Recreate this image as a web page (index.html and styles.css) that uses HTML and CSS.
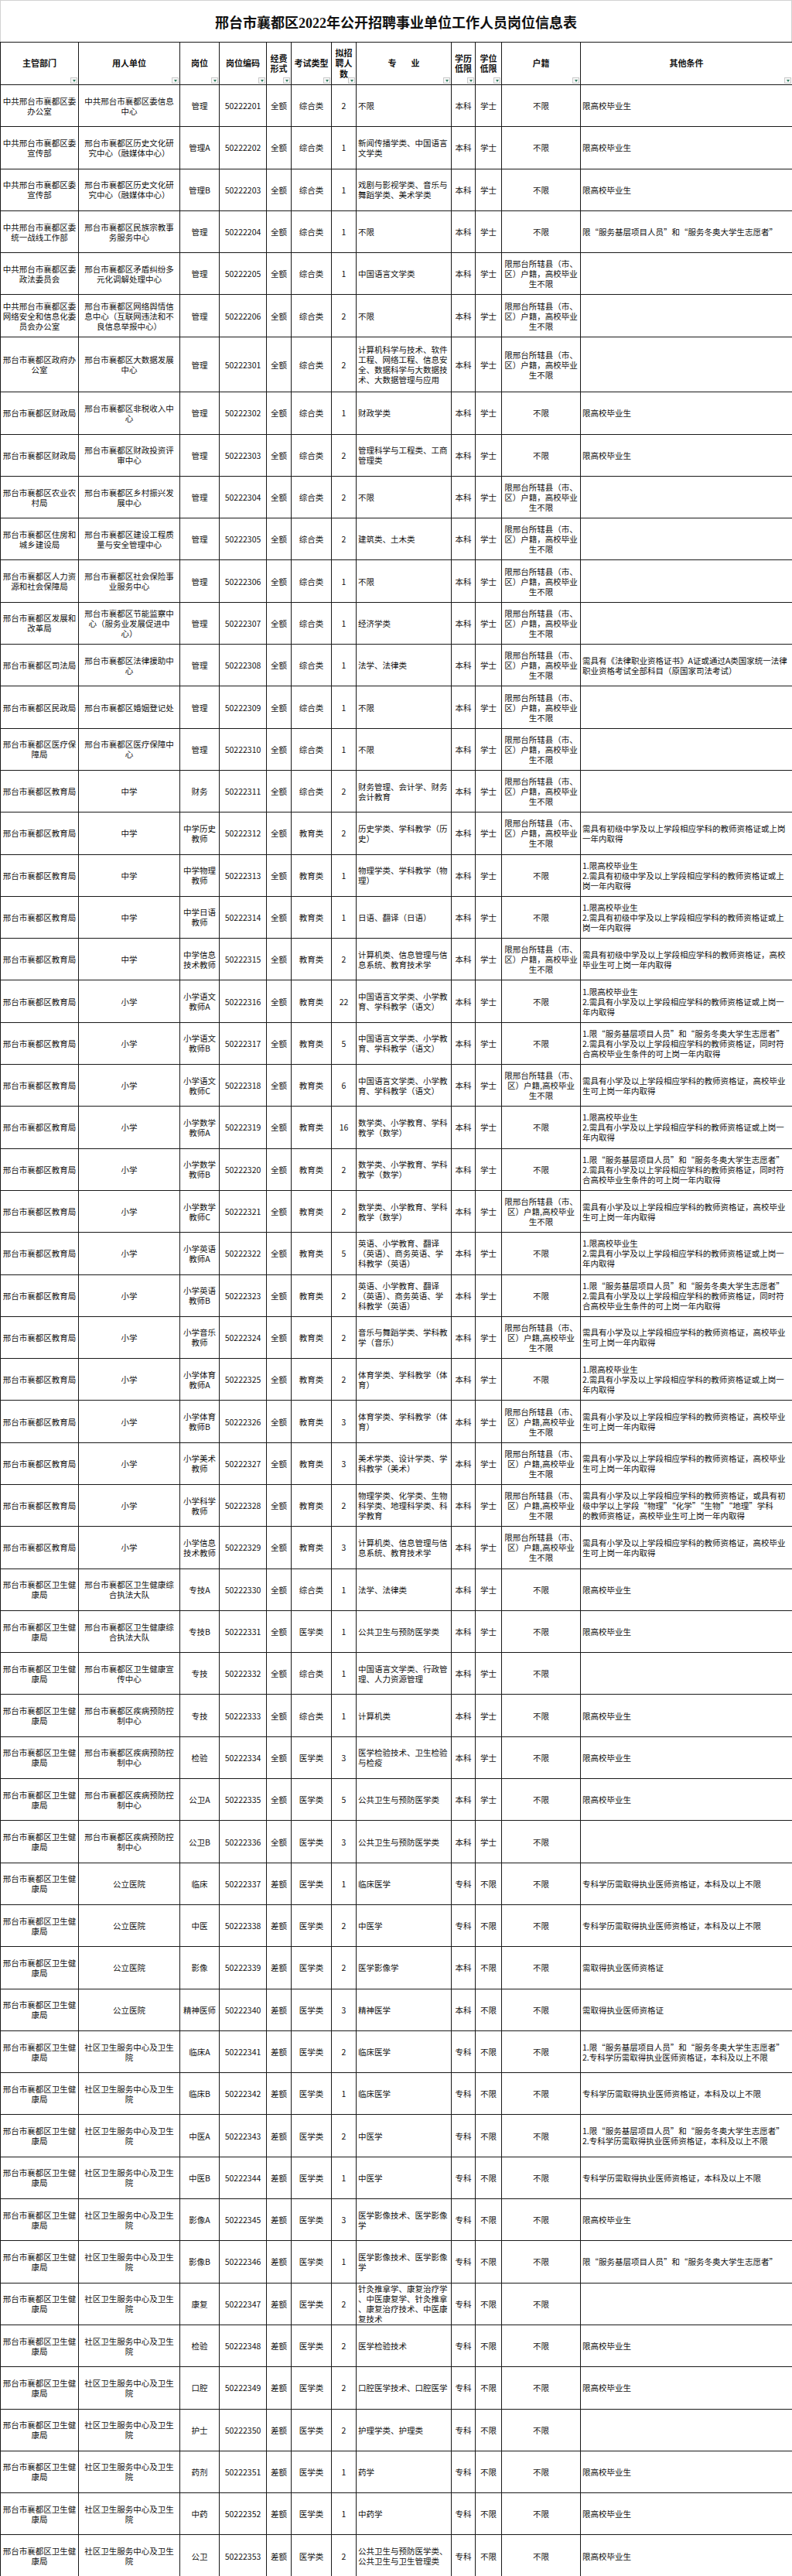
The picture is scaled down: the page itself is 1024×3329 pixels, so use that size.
FILE: index.html
```html
<!DOCTYPE html>
<html lang="zh-CN">
<head>
<meta charset="utf-8">
<title>邢台市襄都区2022年公开招聘事业单位工作人员岗位信息表</title>
<link rel="stylesheet" href="styles.css">
</head>
<body>
<div class="sheet">
  <div class="title">邢台市襄都区2022年公开招聘事业单位工作人员岗位信息表</div>
  <table class="grid">
    <colgroup>
      <col class="c1"><col class="c2"><col class="c3"><col class="c4"><col class="c5"><col class="c6"><col class="c7"><col class="c8"><col class="c9"><col class="c10"><col class="c11"><col class="c12">
    </colgroup>
    <thead>
      <tr class="head">
        <th>主管部门<span class="flt"></span></th>
        <th>用人单位<span class="flt"></span></th>
        <th>岗位<span class="flt"></span></th>
        <th>岗位编码<span class="flt"></span></th>
        <th>经费<br>形式<span class="flt"></span></th>
        <th>考试类型<span class="flt"></span></th>
        <th>拟招<br>聘人<br>数<span class="flt"></span></th>
        <th>专<span class="gap"></span>业<span class="flt"></span></th>
        <th>学历<br>低限<span class="flt"></span></th>
        <th>学位<br>低限<span class="flt"></span></th>
        <th>户籍<span class="flt"></span></th>
        <th>其他条件<span class="flt"></span></th>
      </tr>
    </thead>
    <tbody>
      <tr><td>中共邢台市襄都区委<br>办公室</td><td>中共邢台市襄都区委信息<br>中心</td><td>管理</td><td>50222201</td><td>全额</td><td>综合类</td><td>2</td><td class="l">不限</td><td>本科</td><td>学士</td><td>不限</td><td class="l">限高校毕业生</td></tr>
      <tr><td>中共邢台市襄都区委<br>宣传部</td><td>邢台市襄都区历史文化研<br>究中心（融媒体中心）</td><td>管理A</td><td>50222202</td><td>全额</td><td>综合类</td><td>1</td><td class="l">新闻传播学类、中国语言<br>文学类</td><td>本科</td><td>学士</td><td>不限</td><td class="l">限高校毕业生</td></tr>
      <tr><td>中共邢台市襄都区委<br>宣传部</td><td>邢台市襄都区历史文化研<br>究中心（融媒体中心）</td><td>管理B</td><td>50222203</td><td>全额</td><td>综合类</td><td>1</td><td class="l">戏剧与影视学类、音乐与<br>舞蹈学类、美术学类</td><td>本科</td><td>学士</td><td>不限</td><td class="l">限高校毕业生</td></tr>
      <tr><td>中共邢台市襄都区委<br>统一战线工作部</td><td>邢台市襄都区民族宗教事<br>务服务中心</td><td>管理</td><td>50222204</td><td>全额</td><td>综合类</td><td>1</td><td class="l">不限</td><td>本科</td><td>学士</td><td>不限</td><td class="l">限“服务基层项目人员”和“服务冬奥大学生志愿者”</td></tr>
      <tr><td>中共邢台市襄都区委<br>政法委员会</td><td>邢台市襄都区矛盾纠纷多<br>元化调解处理中心</td><td>管理</td><td>50222205</td><td>全额</td><td>综合类</td><td>1</td><td class="l">中国语言文学类</td><td>本科</td><td>学士</td><td>限邢台所辖县（市、<br>区）户籍，高校毕业<br>生不限</td><td class="l"></td></tr>
      <tr><td>中共邢台市襄都区委<br>网络安全和信息化委<br>员会办公室</td><td>邢台市襄都区网络舆情信<br>息中心（互联网违法和不<br>良信息举报中心）</td><td>管理</td><td>50222206</td><td>全额</td><td>综合类</td><td>2</td><td class="l">不限</td><td>本科</td><td>学士</td><td>限邢台所辖县（市、<br>区）户籍，高校毕业<br>生不限</td><td class="l"></td></tr>
      <tr class="tall"><td>邢台市襄都区政府办<br>公室</td><td>邢台市襄都区大数据发展<br>中心</td><td>管理</td><td>50222301</td><td>全额</td><td>综合类</td><td>2</td><td class="l">计算机科学与技术、软件<br>工程、网络工程、信息安<br>全、数据科学与大数据技<br>术、大数据管理与应用</td><td>本科</td><td>学士</td><td>限邢台所辖县（市、<br>区）户籍，高校毕业<br>生不限</td><td class="l"></td></tr>
      <tr><td>邢台市襄都区财政局</td><td>邢台市襄都区非税收入中<br>心</td><td>管理</td><td>50222302</td><td>全额</td><td>综合类</td><td>1</td><td class="l">财政学类</td><td>本科</td><td>学士</td><td>不限</td><td class="l">限高校毕业生</td></tr>
      <tr><td>邢台市襄都区财政局</td><td>邢台市襄都区财政投资评<br>审中心</td><td>管理</td><td>50222303</td><td>全额</td><td>综合类</td><td>2</td><td class="l">管理科学与工程类、工商<br>管理类</td><td>本科</td><td>学士</td><td>不限</td><td class="l">限高校毕业生</td></tr>
      <tr><td>邢台市襄都区农业农<br>村局</td><td>邢台市襄都区乡村振兴发<br>展中心</td><td>管理</td><td>50222304</td><td>全额</td><td>综合类</td><td>2</td><td class="l">不限</td><td>本科</td><td>学士</td><td>限邢台所辖县（市、<br>区）户籍，高校毕业<br>生不限</td><td class="l"></td></tr>
      <tr><td>邢台市襄都区住房和<br>城乡建设局</td><td>邢台市襄都区建设工程质<br>量与安全管理中心</td><td>管理</td><td>50222305</td><td>全额</td><td>综合类</td><td>2</td><td class="l">建筑类、土木类</td><td>本科</td><td>学士</td><td>限邢台所辖县（市、<br>区）户籍，高校毕业<br>生不限</td><td class="l"></td></tr>
      <tr><td>邢台市襄都区人力资<br>源和社会保障局</td><td>邢台市襄都区社会保险事<br>业服务中心</td><td>管理</td><td>50222306</td><td>全额</td><td>综合类</td><td>1</td><td class="l">不限</td><td>本科</td><td>学士</td><td>限邢台所辖县（市、<br>区）户籍，高校毕业<br>生不限</td><td class="l"></td></tr>
      <tr><td>邢台市襄都区发展和<br>改革局</td><td>邢台市襄都区节能监察中<br>心（服务业发展促进中<br>心）</td><td>管理</td><td>50222307</td><td>全额</td><td>综合类</td><td>1</td><td class="l">经济学类</td><td>本科</td><td>学士</td><td>限邢台所辖县（市、<br>区）户籍，高校毕业<br>生不限</td><td class="l"></td></tr>
      <tr><td>邢台市襄都区司法局</td><td>邢台市襄都区法律援助中<br>心</td><td>管理</td><td>50222308</td><td>全额</td><td>综合类</td><td>1</td><td class="l">法学、法律类</td><td>本科</td><td>学士</td><td>限邢台所辖县（市、<br>区）户籍，高校毕业<br>生不限</td><td class="l">需具有《法律职业资格证书》A证或通过A类国家统一法律<br>职业资格考试全部科目（原国家司法考试）</td></tr>
      <tr><td>邢台市襄都区民政局</td><td>邢台市襄都区婚姻登记处</td><td>管理</td><td>50222309</td><td>全额</td><td>综合类</td><td>1</td><td class="l">不限</td><td>本科</td><td>学士</td><td>限邢台所辖县（市、<br>区）户籍，高校毕业<br>生不限</td><td class="l"></td></tr>
      <tr><td>邢台市襄都区医疗保<br>障局</td><td>邢台市襄都区医疗保障中<br>心</td><td>管理</td><td>50222310</td><td>全额</td><td>综合类</td><td>1</td><td class="l">不限</td><td>本科</td><td>学士</td><td>限邢台所辖县（市、<br>区）户籍，高校毕业<br>生不限</td><td class="l"></td></tr>
      <tr><td>邢台市襄都区教育局</td><td>中学</td><td>财务</td><td>50222311</td><td>全额</td><td>综合类</td><td>2</td><td class="l">财务管理、会计学、财务<br>会计教育</td><td>本科</td><td>学士</td><td>限邢台所辖县（市、<br>区）户籍，高校毕业<br>生不限</td><td class="l"></td></tr>
      <tr><td>邢台市襄都区教育局</td><td>中学</td><td>中学历史<br>教师</td><td>50222312</td><td>全额</td><td>教育类</td><td>2</td><td class="l">历史学类、学科教学（历<br>史）</td><td>本科</td><td>学士</td><td>限邢台所辖县（市、<br>区）户籍，高校毕业<br>生不限</td><td class="l">需具有初级中学及以上学段相应学科的教师资格证或上岗<br>一年内取得</td></tr>
      <tr><td>邢台市襄都区教育局</td><td>中学</td><td>中学物理<br>教师</td><td>50222313</td><td>全额</td><td>教育类</td><td>1</td><td class="l">物理学类、学科教学（物<br>理）</td><td>本科</td><td>学士</td><td>不限</td><td class="l">1.限高校毕业生<br>2.需具有初级中学及以上学段相应学科的教师资格证或上<br>岗一年内取得</td></tr>
      <tr><td>邢台市襄都区教育局</td><td>中学</td><td>中学日语<br>教师</td><td>50222314</td><td>全额</td><td>教育类</td><td>1</td><td class="l">日语、翻译（日语）</td><td>本科</td><td>学士</td><td>不限</td><td class="l">1.限高校毕业生<br>2.需具有初级中学及以上学段相应学科的教师资格证或上<br>岗一年内取得</td></tr>
      <tr><td>邢台市襄都区教育局</td><td>中学</td><td>中学信息<br>技术教师</td><td>50222315</td><td>全额</td><td>教育类</td><td>2</td><td class="l">计算机类、信息管理与信<br>息系统、教育技术学</td><td>本科</td><td>学士</td><td>限邢台所辖县（市、<br>区）户籍，高校毕业<br>生不限</td><td class="l">需具有初级中学及以上学段相应学科的教师资格证，高校<br>毕业生可上岗一年内取得</td></tr>
      <tr><td>邢台市襄都区教育局</td><td>小学</td><td>小学语文<br>教师A</td><td>50222316</td><td>全额</td><td>教育类</td><td>22</td><td class="l">中国语言文学类、小学教<br>育、学科教学（语文）</td><td>本科</td><td>学士</td><td>不限</td><td class="l">1.限高校毕业生<br>2.需具有小学及以上学段相应学科的教师资格证或上岗一<br>年内取得</td></tr>
      <tr><td>邢台市襄都区教育局</td><td>小学</td><td>小学语文<br>教师B</td><td>50222317</td><td>全额</td><td>教育类</td><td>5</td><td class="l">中国语言文学类、小学教<br>育、学科教学（语文）</td><td>本科</td><td>学士</td><td>不限</td><td class="l">1.限“服务基层项目人员”和“服务冬奥大学生志愿者”<br>2.需具有小学及以上学段相应学科的教师资格证，同时符<br>合高校毕业生条件的可上岗一年内取得</td></tr>
      <tr><td>邢台市襄都区教育局</td><td>小学</td><td>小学语文<br>教师C</td><td>50222318</td><td>全额</td><td>教育类</td><td>6</td><td class="l">中国语言文学类、小学教<br>育、学科教学（语文）</td><td>本科</td><td>学士</td><td>限邢台所辖县（市、<br>区）户籍,高校毕业<br>生不限</td><td class="l">需具有小学及以上学段相应学科的教师资格证，高校毕业<br>生可上岗一年内取得</td></tr>
      <tr><td>邢台市襄都区教育局</td><td>小学</td><td>小学数学<br>教师A</td><td>50222319</td><td>全额</td><td>教育类</td><td>16</td><td class="l">数学类、小学教育、学科<br>教学（数学）</td><td>本科</td><td>学士</td><td>不限</td><td class="l">1.限高校毕业生<br>2.需具有小学及以上学段相应学科的教师资格证或上岗一<br>年内取得</td></tr>
      <tr><td>邢台市襄都区教育局</td><td>小学</td><td>小学数学<br>教师B</td><td>50222320</td><td>全额</td><td>教育类</td><td>2</td><td class="l">数学类、小学教育、学科<br>教学（数学）</td><td>本科</td><td>学士</td><td>不限</td><td class="l">1.限“服务基层项目人员”和“服务冬奥大学生志愿者”<br>2.需具有小学及以上学段相应学科的教师资格证，同时符<br>合高校毕业生条件的可上岗一年内取得</td></tr>
      <tr><td>邢台市襄都区教育局</td><td>小学</td><td>小学数学<br>教师C</td><td>50222321</td><td>全额</td><td>教育类</td><td>2</td><td class="l">数学类、小学教育、学科<br>教学（数学）</td><td>本科</td><td>学士</td><td>限邢台所辖县（市、<br>区）户籍,高校毕业<br>生不限</td><td class="l">需具有小学及以上学段相应学科的教师资格证，高校毕业<br>生可上岗一年内取得</td></tr>
      <tr><td>邢台市襄都区教育局</td><td>小学</td><td>小学英语<br>教师A</td><td>50222322</td><td>全额</td><td>教育类</td><td>5</td><td class="l">英语、小学教育、翻译<br>（英语）、商务英语、学<br>科教学（英语）</td><td>本科</td><td>学士</td><td>不限</td><td class="l">1.限高校毕业生<br>2.需具有小学及以上学段相应学科的教师资格证或上岗一<br>年内取得</td></tr>
      <tr><td>邢台市襄都区教育局</td><td>小学</td><td>小学英语<br>教师B</td><td>50222323</td><td>全额</td><td>教育类</td><td>2</td><td class="l">英语、小学教育、翻译<br>（英语）、商务英语、学<br>科教学（英语）</td><td>本科</td><td>学士</td><td>不限</td><td class="l">1.限“服务基层项目人员”和“服务冬奥大学生志愿者”<br>2.需具有小学及以上学段相应学科的教师资格证，同时符<br>合高校毕业生条件的可上岗一年内取得</td></tr>
      <tr><td>邢台市襄都区教育局</td><td>小学</td><td>小学音乐<br>教师</td><td>50222324</td><td>全额</td><td>教育类</td><td>2</td><td class="l">音乐与舞蹈学类、学科教<br>学（音乐）</td><td>本科</td><td>学士</td><td>限邢台所辖县（市、<br>区）户籍,高校毕业<br>生不限</td><td class="l">需具有小学及以上学段相应学科的教师资格证，高校毕业<br>生可上岗一年内取得</td></tr>
      <tr><td>邢台市襄都区教育局</td><td>小学</td><td>小学体育<br>教师A</td><td>50222325</td><td>全额</td><td>教育类</td><td>2</td><td class="l">体育学类、学科教学（体<br>育）</td><td>本科</td><td>学士</td><td>不限</td><td class="l">1.限高校毕业生<br>2.需具有小学及以上学段相应学科的教师资格证或上岗一<br>年内取得</td></tr>
      <tr><td>邢台市襄都区教育局</td><td>小学</td><td>小学体育<br>教师B</td><td>50222326</td><td>全额</td><td>教育类</td><td>3</td><td class="l">体育学类、学科教学（体<br>育）</td><td>本科</td><td>学士</td><td>限邢台所辖县（市、<br>区）户籍,高校毕业<br>生不限</td><td class="l">需具有小学及以上学段相应学科的教师资格证，高校毕业<br>生可上岗一年内取得</td></tr>
      <tr><td>邢台市襄都区教育局</td><td>小学</td><td>小学美术<br>教师</td><td>50222327</td><td>全额</td><td>教育类</td><td>3</td><td class="l">美术学类、设计学类、学<br>科教学（美术）</td><td>本科</td><td>学士</td><td>限邢台所辖县（市、<br>区）户籍,高校毕业<br>生不限</td><td class="l">需具有小学及以上学段相应学科的教师资格证，高校毕业<br>生可上岗一年内取得</td></tr>
      <tr><td>邢台市襄都区教育局</td><td>小学</td><td>小学科学<br>教师</td><td>50222328</td><td>全额</td><td>教育类</td><td>2</td><td class="l">物理学类、化学类、生物<br>科学类、地理科学类、科<br>学教育</td><td>本科</td><td>学士</td><td>限邢台所辖县（市、<br>区）户籍,高校毕业<br>生不限</td><td class="l">需具有小学及以上学段相应学科的教师资格证，或具有初<br>级中学以上学段“物理”“化学”“生物”“地理”学科<br>的教师资格证，高校毕业生可上岗一年内取得</td></tr>
      <tr><td>邢台市襄都区教育局</td><td>小学</td><td>小学信息<br>技术教师</td><td>50222329</td><td>全额</td><td>教育类</td><td>3</td><td class="l">计算机类、信息管理与信<br>息系统、教育技术学</td><td>本科</td><td>学士</td><td>限邢台所辖县（市、<br>区）户籍,高校毕业<br>生不限</td><td class="l">需具有小学及以上学段相应学科的教师资格证，高校毕业<br>生可上岗一年内取得</td></tr>
      <tr><td>邢台市襄都区卫生健<br>康局</td><td>邢台市襄都区卫生健康综<br>合执法大队</td><td>专技A</td><td>50222330</td><td>全额</td><td>综合类</td><td>1</td><td class="l">法学、法律类</td><td>本科</td><td>学士</td><td>不限</td><td class="l">限高校毕业生</td></tr>
      <tr><td>邢台市襄都区卫生健<br>康局</td><td>邢台市襄都区卫生健康综<br>合执法大队</td><td>专技B</td><td>50222331</td><td>全额</td><td>医学类</td><td>1</td><td class="l">公共卫生与预防医学类</td><td>本科</td><td>学士</td><td>不限</td><td class="l">限高校毕业生</td></tr>
      <tr><td>邢台市襄都区卫生健<br>康局</td><td>邢台市襄都区卫生健康宣<br>传中心</td><td>专技</td><td>50222332</td><td>全额</td><td>综合类</td><td>1</td><td class="l">中国语言文学类、行政管<br>理、人力资源管理</td><td>本科</td><td>学士</td><td>不限</td><td class="l"></td></tr>
      <tr><td>邢台市襄都区卫生健<br>康局</td><td>邢台市襄都区疾病预防控<br>制中心</td><td>专技</td><td>50222333</td><td>全额</td><td>综合类</td><td>1</td><td class="l">计算机类</td><td>本科</td><td>学士</td><td>不限</td><td class="l">限高校毕业生</td></tr>
      <tr><td>邢台市襄都区卫生健<br>康局</td><td>邢台市襄都区疾病预防控<br>制中心</td><td>检验</td><td>50222334</td><td>全额</td><td>医学类</td><td>3</td><td class="l">医学检验技术、卫生检验<br>与检疫</td><td>本科</td><td>学士</td><td>不限</td><td class="l">限高校毕业生</td></tr>
      <tr><td>邢台市襄都区卫生健<br>康局</td><td>邢台市襄都区疾病预防控<br>制中心</td><td>公卫A</td><td>50222335</td><td>全额</td><td>医学类</td><td>5</td><td class="l">公共卫生与预防医学类</td><td>本科</td><td>学士</td><td>不限</td><td class="l">限高校毕业生</td></tr>
      <tr><td>邢台市襄都区卫生健<br>康局</td><td>邢台市襄都区疾病预防控<br>制中心</td><td>公卫B</td><td>50222336</td><td>全额</td><td>医学类</td><td>3</td><td class="l">公共卫生与预防医学类</td><td>本科</td><td>学士</td><td>不限</td><td class="l"></td></tr>
      <tr><td>邢台市襄都区卫生健<br>康局</td><td>公立医院</td><td>临床</td><td>50222337</td><td>差额</td><td>医学类</td><td>1</td><td class="l">临床医学</td><td>专科</td><td>不限</td><td>不限</td><td class="l">专科学历需取得执业医师资格证，本科及以上不限</td></tr>
      <tr><td>邢台市襄都区卫生健<br>康局</td><td>公立医院</td><td>中医</td><td>50222338</td><td>差额</td><td>医学类</td><td>2</td><td class="l">中医学</td><td>专科</td><td>不限</td><td>不限</td><td class="l">专科学历需取得执业医师资格证，本科及以上不限</td></tr>
      <tr><td>邢台市襄都区卫生健<br>康局</td><td>公立医院</td><td>影像</td><td>50222339</td><td>差额</td><td>医学类</td><td>2</td><td class="l">医学影像学</td><td>本科</td><td>不限</td><td>不限</td><td class="l">需取得执业医师资格证</td></tr>
      <tr><td>邢台市襄都区卫生健<br>康局</td><td>公立医院</td><td>精神医师</td><td>50222340</td><td>差额</td><td>医学类</td><td>3</td><td class="l">精神医学</td><td>本科</td><td>不限</td><td>不限</td><td class="l">需取得执业医师资格证</td></tr>
      <tr><td>邢台市襄都区卫生健<br>康局</td><td>社区卫生服务中心及卫生<br>院</td><td>临床A</td><td>50222341</td><td>差额</td><td>医学类</td><td>2</td><td class="l">临床医学</td><td>专科</td><td>不限</td><td>不限</td><td class="l">1.限“服务基层项目人员”和“服务冬奥大学生志愿者”<br>2.专科学历需取得执业医师资格证，本科及以上不限</td></tr>
      <tr><td>邢台市襄都区卫生健<br>康局</td><td>社区卫生服务中心及卫生<br>院</td><td>临床B</td><td>50222342</td><td>差额</td><td>医学类</td><td>1</td><td class="l">临床医学</td><td>专科</td><td>不限</td><td>不限</td><td class="l">专科学历需取得执业医师资格证，本科及以上不限</td></tr>
      <tr><td>邢台市襄都区卫生健<br>康局</td><td>社区卫生服务中心及卫生<br>院</td><td>中医A</td><td>50222343</td><td>差额</td><td>医学类</td><td>2</td><td class="l">中医学</td><td>专科</td><td>不限</td><td>不限</td><td class="l">1.限“服务基层项目人员”和“服务冬奥大学生志愿者”<br>2.专科学历需取得执业医师资格证，本科及以上不限</td></tr>
      <tr><td>邢台市襄都区卫生健<br>康局</td><td>社区卫生服务中心及卫生<br>院</td><td>中医B</td><td>50222344</td><td>差额</td><td>医学类</td><td>1</td><td class="l">中医学</td><td>专科</td><td>不限</td><td>不限</td><td class="l">专科学历需取得执业医师资格证，本科及以上不限</td></tr>
      <tr><td>邢台市襄都区卫生健<br>康局</td><td>社区卫生服务中心及卫生<br>院</td><td>影像A</td><td>50222345</td><td>差额</td><td>医学类</td><td>3</td><td class="l">医学影像技术、医学影像<br>学</td><td>专科</td><td>不限</td><td>不限</td><td class="l">限高校毕业生</td></tr>
      <tr><td>邢台市襄都区卫生健<br>康局</td><td>社区卫生服务中心及卫生<br>院</td><td>影像B</td><td>50222346</td><td>差额</td><td>医学类</td><td>1</td><td class="l">医学影像技术、医学影像<br>学</td><td>专科</td><td>不限</td><td>不限</td><td class="l">限“服务基层项目人员”和“服务冬奥大学生志愿者”</td></tr>
      <tr><td>邢台市襄都区卫生健<br>康局</td><td>社区卫生服务中心及卫生<br>院</td><td>康复</td><td>50222347</td><td>差额</td><td>医学类</td><td>2</td><td class="l">针灸推拿学、康复治疗学<br>、中医康复学、针灸推拿<br>、康复治疗技术、中医康<br>复技术</td><td>专科</td><td>不限</td><td>不限</td><td class="l"></td></tr>
      <tr><td>邢台市襄都区卫生健<br>康局</td><td>社区卫生服务中心及卫生<br>院</td><td>检验</td><td>50222348</td><td>差额</td><td>医学类</td><td>2</td><td class="l">医学检验技术</td><td>专科</td><td>不限</td><td>不限</td><td class="l">限高校毕业生</td></tr>
      <tr><td>邢台市襄都区卫生健<br>康局</td><td>社区卫生服务中心及卫生<br>院</td><td>口腔</td><td>50222349</td><td>差额</td><td>医学类</td><td>2</td><td class="l">口腔医学技术、口腔医学</td><td>专科</td><td>不限</td><td>不限</td><td class="l">限高校毕业生</td></tr>
      <tr><td>邢台市襄都区卫生健<br>康局</td><td>社区卫生服务中心及卫生<br>院</td><td>护士</td><td>50222350</td><td>差额</td><td>医学类</td><td>2</td><td class="l">护理学类、护理类</td><td>专科</td><td>不限</td><td>不限</td><td class="l"></td></tr>
      <tr><td>邢台市襄都区卫生健<br>康局</td><td>社区卫生服务中心及卫生<br>院</td><td>药剂</td><td>50222351</td><td>差额</td><td>医学类</td><td>1</td><td class="l">药学</td><td>专科</td><td>不限</td><td>不限</td><td class="l">限高校毕业生</td></tr>
      <tr><td>邢台市襄都区卫生健<br>康局</td><td>社区卫生服务中心及卫生<br>院</td><td>中药</td><td>50222352</td><td>差额</td><td>医学类</td><td>1</td><td class="l">中药学</td><td>专科</td><td>不限</td><td>不限</td><td class="l">限高校毕业生</td></tr>
      <tr><td>邢台市襄都区卫生健<br>康局</td><td>社区卫生服务中心及卫生<br>院</td><td>公卫</td><td>50222353</td><td>差额</td><td>医学类</td><td>2</td><td class="l">公共卫生与预防医学类、<br>公共卫生与卫生管理类</td><td>专科</td><td>不限</td><td>不限</td><td class="l">限高校毕业生</td></tr>
    </tbody>
  </table>
</div>
</body>
</html>
```

FILE: styles.css
```css
html, body {
  margin: 0;
  padding: 0;
  background: #ffffff;
}

body {
  width: 1024px;
  font-family: "Noto Sans CJK SC", "Liberation Sans", sans-serif;
  color: #111111;
}

.sheet {
  width: 1024px;
}

.title {
  height: 54px;
  box-sizing: border-box;
  border: 1px solid #d2d2d2;
  border-bottom: none;
  display: flex;
  align-items: center;
  justify-content: center;
  font-family: "Liberation Serif", "Noto Sans CJK SC", serif;
  font-weight: bold;
  font-size: 18px;
  color: #111111;
}

.grid {
  width: 1024px;
  border-collapse: collapse;
  table-layout: fixed;
  font-family: "Noto Sans CJK SC", "Liberation Sans", sans-serif;
  font-size: 10.5px;
  line-height: 13px;
}

.c1 { width: 101px; }
.c2 { width: 131px; }
.c3 { width: 51px; }
.c4 { width: 61px; }
.c5 { width: 32px; }
.c6 { width: 52px; }
.c7 { width: 32px; }
.c8 { width: 123px; }
.c9 { width: 31px; }
.c10 { width: 34px; }
.c11 { width: 102px; }
.c12 { width: 274px; }

.grid th,
.grid td {
  border: 1px solid #1a1a1a;
  padding: 0 2px;
  text-align: center;
  vertical-align: middle;
  overflow: hidden;
}

.grid td.l {
  text-align: left;
}

.grid tbody tr {
  height: 54.3px;
}

.grid tbody tr.tall {
  height: 71.5px;
}

.grid tr.head {
  height: 55px;
}

.grid th {
  position: relative;
  font-size: 11px;
  line-height: 13.5px;
  font-weight: bold;
  color: #111111;
}

.gap {
  display: inline-block;
  width: 19px;
}

.flt {
  position: absolute;
  right: 1px;
  bottom: 1px;
  width: 9px;
  height: 8px;
  box-sizing: border-box;
  border: 1px solid #c9c9c9;
  background: #f7f7f7;
}

.flt::after {
  content: "";
  position: absolute;
  left: 2px;
  top: 2px;
  border-left: 2px solid transparent;
  border-right: 2px solid transparent;
  border-top: 3px solid #2f7d5f;
}
```
